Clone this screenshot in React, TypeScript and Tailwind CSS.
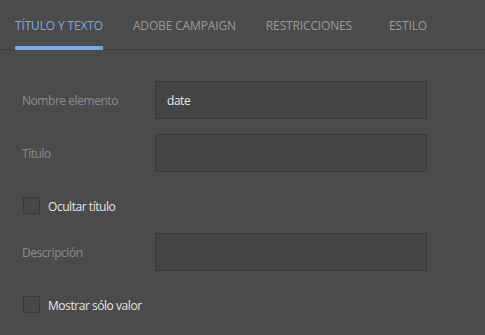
export default function App() {
  const tabs = ['TÍTULO Y TEXTO', 'ADOBE CAMPAIGN', 'RESTRICCIONES', 'ESTILO'];
  const tabMargins = ['ml-[15px]', 'ml-[30px]', 'ml-[30px]', 'ml-[37px]'];

  return (
    <div className="w-[485px] h-[335px] bg-[#4b4b4b] overflow-hidden font-['Open_Sans',sans-serif] text-[12px]">
      <div className="flex h-[50px] border-b border-[#3f3f3f]">
        {tabs.map((t, i) => (
          <div
            key={t}
            className={`${tabMargins[i]} flex items-center h-full relative tracking-[-0.15px] ${
              i === 0 ? 'text-[#74a7ee]' : 'text-[#9a9a9a]'
            }`}>
            <span className="pt-[3px]">{t}</span>
            {i === 0 && <div className="absolute left-0 right-0 bottom-[-1px] h-[4px] bg-[#74a7ee]" />}
          </div>
        ))}
      </div>

      <div className="flex flex-col pl-[22px] tracking-[-0.45px]">
        <div className="flex items-center mt-[31px]">
          <label className="w-[133px] pt-[2px] text-[#8c8c8c]">Nombre elemento</label>
          <div className="w-[272px] h-[38px] bg-[#454545] border border-[#393939] flex items-center pl-[11px] pt-[1px] text-[#e8e8e8]">
            date
          </div>
        </div>
        <div className="flex items-center mt-[15px]">
          <label className="w-[133px] pt-[2px] text-[#8c8c8c]">Título</label>
          <div className="w-[272px] h-[38px] bg-[#454545] border border-[#393939]" />
        </div>
        <div className="flex items-center mt-[25px] h-[17px]">
          <div className="ml-[1px] w-[17px] h-[17px] bg-[#484848] border border-[#393939]" />
          <span className="ml-[8px] pt-[2px] text-[#e6e6e6]">Ocultar título</span>
        </div>
        <div className="flex items-center mt-[19px]">
          <label className="w-[133px] pt-[2px] text-[#8c8c8c]">Descripción</label>
          <div className="w-[272px] h-[38px] bg-[#454545] border border-[#393939]" />
        </div>
        <div className="flex items-center mt-[25px] h-[17px]">
          <div className="ml-[1px] w-[17px] h-[17px] bg-[#484848] border border-[#393939]" />
          <span className="ml-[8px] pt-[2px] text-[#e6e6e6]">Mostrar sólo valor</span>
        </div>
      </div>
    </div>
  );
}
